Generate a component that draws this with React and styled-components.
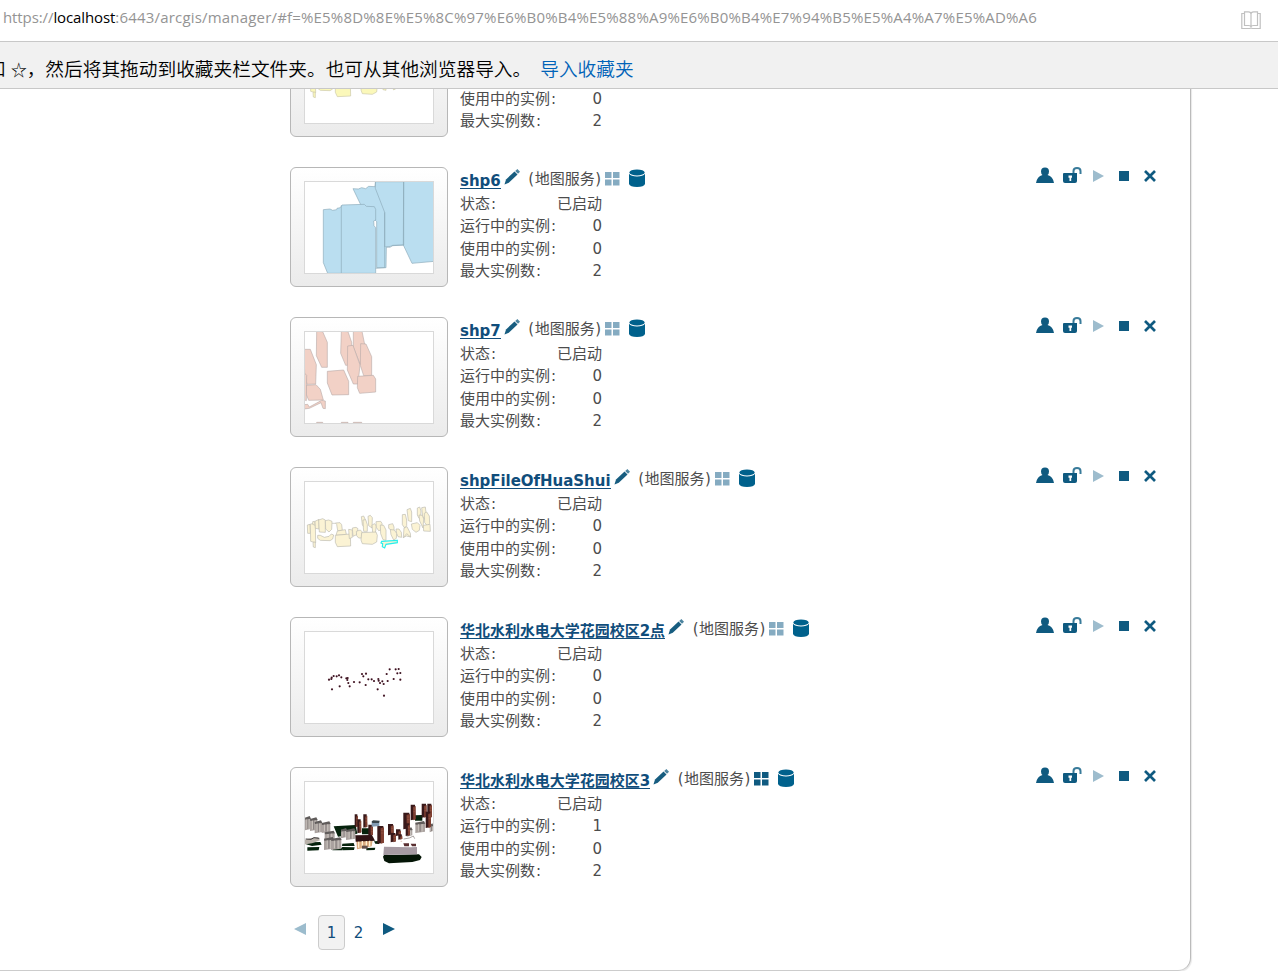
import React from "react";
import styled, { createGlobalStyle } from "styled-components";

const GlobalStyle = createGlobalStyle`
  * { box-sizing: border-box; }
  body { margin: 0; background: #fff; overflow: hidden; }
`;

const Browser = styled.div`
  display: flex;
  flex-direction: column;
  width: 1278px;
  height: 971px;
  overflow: hidden;
  font-family: "DejaVu Sans", "Noto Sans CJK SC", sans-serif;
`;
const AddressBar = styled.header`
  display: flex;
  justify-content: space-between;
  height: 42px;
  flex: none;
  padding: 5px 17px 0 3px;
  border-bottom: 1px solid #c8c8c8;
`;
const Url = styled.div`
  font: 15px/24px "Open Sans", sans-serif;
  letter-spacing: -0.1px;
  white-space: nowrap;
  color: #949494;
  b { font-weight: 400; color: #000; }
`;
const UrlPath = styled.span`
  letter-spacing: 0.185px;
`;
const BookIcon = styled.svg`
  width: 20px;
  height: 19px;
  margin-top: 6px;
`;
const FavoritesBar = styled.div`
  display: flex;
  flex: none;
  height: 47px;
  padding-top: 12px;
  border-bottom: 1px solid #c8c8c8;
  background: #f1f1f1;
  font: 18.7px/28px "Noto Sans CJK SC", sans-serif;
  font-weight: 350;
  white-space: pre;
  color: #000;
`;
const Hint = styled.span`
  margin-left: -13px;
`;
const Star = styled.span`
  display: inline-block;
  width: 16px;
  margin-left: 5px;
  font-size: 16px;
`;
const ImportLink = styled.a`
  margin-left: 9px;
  color: #0063b8;
`;
const Viewport = styled.main`
  flex: 1;
  min-height: 0;
  overflow: hidden;
`;
const Panel = styled.section`
  width: 1191px;
  height: 954px;
  margin-top: -72px;
  padding-left: 290px;
  border-right: 1px solid #bbb;
  border-bottom: 1px solid #ccc;
  border-radius: 0 0 13px 0;
  box-shadow: 1px 1px 1px #e8e8e8;
`;
const Row = styled.article`
  display: flex;
  height: 150px;
`;
const Frame = styled.div`
  width: 158px;
  height: 120px;
  flex: none;
  padding: 13px;
  border: 1px solid #b7b7b7;
  border-radius: 6px;
  background: linear-gradient(#fff, #ebebeb);
`;
const Thumb = styled.svg`
  display: block;
  width: 130px;
  height: 93px;
  border: 1px solid #d9d9d9;
  background: #fff;
`;
const Details = styled.div`
  flex: 1;
  padding: 1px 0 0 12px;
  font-size: 15px;
  color: #4c4c4c;
`;
const TitleLine = styled.div`
  display: flex;
  height: 25px;
  line-height: 25px;
  white-space: nowrap;
`;
const ServiceName = styled.a`
  height: 20px;
  margin-top: 1px;
  line-height: 24px;
  font-weight: 700;
  letter-spacing: -0.03px;
  color: #104d7b;
  border-bottom: 1px solid #104d7b;
`;
const PencilIcon = styled.svg`
  width: 17px;
  height: 17px;
  margin: 1px 0 0 3px;
`;
const ServiceType = styled.span`
  width: 74px;
  margin: -1px 0 0 7px;
  text-align: center;
  i { font-style: normal; margin: 0 0.5px; }
`;
const GridIcon = styled.svg`
  width: 15px;
  height: 14px;
  margin: 4px 0 0 3px;
  fill: ${(p) => (p.$active ? "#0f5a80" : "#85abc1")};
`;
const DatabaseIcon = styled.svg`
  width: 16px;
  height: 18px;
  margin: 1px 0 0 9px;
`;
const Stat = styled.div`
  display: flex;
  justify-content: space-between;
  width: 142px;
  height: 22.4px;
  line-height: 22.4px;
`;
const Colon = styled.span`
  margin-left: 1px;
`;
const Actions = styled.div`
  display: flex;
  width: 121px;
  height: 17px;
  margin-right: 33px;
  svg { display: block; }
`;
const Pager = styled.nav`
  display: flex;
  height: 35px;
  margin-top: -2px;
  font-size: 15px;
  line-height: 35px;
  color: #104d7b;
`;
const PageNumber = styled.span`
  width: 27px;
  height: 35px;
  text-align: center;
  border: 1px solid ${(p) => (p.$current ? "#ccc" : "transparent")};
  border-radius: 4px;
  background: ${(p) => (p.$current ? "#f2f2f2" : "transparent")};
`;
const Arrow = styled.svg`
  width: 12px;
  height: 14px;
  margin: ${(p) => (p.$next ? "7px 0 0 11px" : "7px 12px 0 4px")};
  fill: ${(p) => (p.$next ? "#0f5a80" : "#9cbccd")};
`;

const YELLOW_SHAPES = [
  "82,195 90,193 91,220 83,220", "91,192 106,190 107,248 92,244", "98,185 104,184 106,196 98,193",
  "105,184 117,178 117,207 106,205", "116,180 128,176 136,180 136,217 118,216", "136,182 146,180 156,184 155,208 147,216 137,207",
  "99,247 106,246 106,263 100,261", "113,226 121,226 133,232 147,229 154,222 161,225 158,237 150,242 121,241 113,235",
  "166,189 180,188 185,194 187,211 173,212 170,193", "172,213 196,209 199,223 168,226", "166,226 211,222 212,258 172,260 166,247",
  "206,208 217,210 217,232 208,236", "217,204 228,202 234,206 230,224 219,229", "229,214 241,210 247,216 245,234 236,234 230,227",
  "244,170 251,168 256,179 255,207 247,194", "249,180 257,179 262,194 262,214 251,214 250,202",
  "264,169 271,166 277,173 276,204 266,197", "276,195 284,191 289,198 286,220 278,217",
  "288,185 302,184 306,190 306,209 296,212 289,202", "245,218 288,216 292,226 290,246 277,253 247,251 243,240", "301,195 311,196 318,210 318,241 309,239 302,221",
  "326,194 338,191 342,201 342,212 335,211 326,205", "331,209 343,210 350,220 349,235 341,240 333,224", "348,207 357,207 364,217 365,232 354,230 350,220",
  "367,164 376,163 380,180 380,197 374,204 367,194", "381,149 391,145 395,156 395,185 385,182",
  "372,204 381,200 391,220 392,231 379,228 370,233", "394,192 412,188 420,196 418,211 408,217 397,208",
  "412,144 419,141 423,153 422,174 417,175 412,165", "425,143 436,141 438,158 437,181 428,169",
  "417,165 427,166 431,177 429,204 419,183", "433,160 440,156 448,168 449,190 442,197 434,188", "430,196 450,193 451,214 431,213",
];
const DOTS = [[147,209],[154,207],[155,203],[161,198],[170,199],[177,196],[184,202],[199,205],[203,204],[202,210],[205,219],[209,229],[156,238],[179,229],[222,216],[239,217],[246,192],[250,199],[258,191],[257,225],[265,208],[275,208],[282,213],[295,207],[296,212],[300,219],[307,214],[311,222],[323,213],[293,238],[312,257],[320,192],[329,178],[341,207],[347,178],[352,190],[356,177],[361,189],[361,209]];
const TOWERS = [[224,163,10,39],[232,178,12,42],[250,163,12,40],[265,194,14,33],[292,198,20,53],[324,192,17,34],[332,219,16,28],[348,208,15,20],[355,223,12,16],[370,158,20,50],[377,190,13,38],[392,134,15,47],[425,131,15,42],[442,131,14,43],[437,155,16,49]];
const GREY_BLOCKS = [[75,173,17,38],[90,177,22,36],[104,186,22,34],[125,189,26,30],[134,217,30,28],[132,236,29,34],[153,237,31,33],[183,209,18,26],[198,210,28,30],[406,188,29,31],[380,207,17,23],[449,195,11,22]];

const drawings = {
  blue: (
    <Thumb viewBox="75 291 384 273" preserveAspectRatio="none">
      <g fill="#badef0" stroke="#8daab9" strokeWidth="2">
        <path d="M219 311l16 1 10-4 12 3 9-7 19 1 2-15h85v190l-33 2-20 5-1 61h-28V410l-45-45z" />
        <path d="M371 288h92v241l-67 6-26-55z" />
        <path d="M286 288v22l28 72v104" fill="none" />
        <path d="M130 374l20-2 8 4 12-2 1-4 10-2 5-8 67-2 6 6 24 1 4 8v32l-6 3 1 14 5 6v137H143l-13-32z" />
        <path d="M184 361v205M314 382v166l-27 2M371 288v192l-34 1-6 6-15-2" fill="none" />
      </g>
    </Thumb>
  ),
  pink: (
    <Thumb viewBox="75 66 384 273" preserveAspectRatio="none">
      <g fill="#f2d1c6" stroke="#b7aaa7" strokeWidth="1.8" strokeLinejoin="round">
        <path d="M110 64l18 1 14 32v75h-17l-16-35zM184 64l20 1 11 32v68l-18 1-15-36z" />
        <path d="M220 64h26l8 39-13 61-21-52z" />
        <path d="M72 118h19l18 46-2 58-26 1-7-31z" />
        <path d="M203 108l16-2 21 59-6 57h-14l-18-42z" />
        <path d="M242 101l16 1 17 38v56l-24 1-10-31z" />
        <path d="M142 184l49-4 15 34v40l-50 1-14-36zM233 199l47-3 7 11v39l-48 4-7-17zM78 226l30-2 13 14 9 32-44 1-8-20z" />
        <path d="M72 284l11-1 5 8 37-20 11 2v23l-7-1-6-17-35 17-16 2z" />
        <path d="M110 337h18v3h-18zM184 337h20v3h-20zM220 337h25v3h-25zM72 188l8 8-1 76-7-3z" />
      </g>
    </Thumb>
  ),
  yellow: (
    <Thumb viewBox="75 66 384 273" preserveAspectRatio="none">
      <g fill="#fbf3d4" stroke="#bdbbb0" strokeWidth="2">
        {YELLOW_SHAPES.map((points) => <polygon key={points} points={points} />)}
      </g>
      <path d="M156 190h10M370 233l10-12 12 10" fill="none" stroke="#bdbbb0" strokeWidth="2" />
      <path d="M305 244l47-3v7l-34 5-4 11-7-4 1-9-5-2z" fill="#fbf3d4" stroke="#27efec" strokeWidth="3.5" />
    </Thumb>
  ),
  partial: (
    <Thumb viewBox="75 66 384 273" preserveAspectRatio="none">
      <g fill="#fbf8ba" stroke="#cbc9aa" strokeWidth="2">
        {YELLOW_SHAPES.map((points) => <polygon key={points} points={points} />)}
      </g>
    </Thumb>
  ),
  points: (
    <Thumb viewBox="75 66 384 273" preserveAspectRatio="none">
      {DOTS.map(([x, y], i) => (
        <g key={i}>
          <circle cx={x} cy={y} r="3.3" fill="#5a2636" />
          <circle cx={x} cy={y} r="1.6" fill="#170911" />
        </g>
      ))}
    </Thumb>
  ),
  city: (
    <Thumb viewBox="75 66 384 273" preserveAspectRatio="none">
      <g fill="#06230d">
        <path d="M161 199l66-4 5 26-58 9zM246 205h25v18h-25zM187 251l34-2 3 9h-38zM82 262l36-1-2 10-34 1zM161 262l26 1v8h-30zM186 261l38 1-2 8-34 1zM405 166l22-1v17h-22zM76 252l19-5 26-1 4 8-29 4zM259 264l27-1-2 7-25 1zM282 244l14-1 2 9-12-1z" />
        <path d="M309 290q2-9 18-5l90-2 8 8-5 9-23 6-70 4-14-7z" fill="#041506" />
      </g>
      {GREY_BLOCKS.map(([x, y, w, h], i) => (
        <g key={i}>
          <path d={`M${x} ${y}l${w} 2v${h - 6}l-${w} 4z`} fill="#aaa29f" />
          <path d={`M${x} ${y}l${w - 3}-5 4 8-${w} 3z`} fill="#605c5b" />
          <path d={`M${x + w / 3} ${y + 5}v${h - 10}M${x + w * 0.7} ${y + 4}v${h - 8}`} stroke="#c9c3bd" strokeWidth="3" />
          <path d={`M${x + w * 0.5} ${y + 4}v${h - 8}`} stroke="#756e70" strokeWidth="2" />
        </g>
      ))}
      <path d="M75 239l22-6 17-1 6 9-24 9-21 3z" fill="#b8b1a9" />
      <path d="M77 237l16 1 9-5 16 2" stroke="#3b3838" strokeWidth="3" fill="none" />
      {TOWERS.map(([x, y, w, h], i) => (
        <g key={i}>
          <path d={`M${x} ${y}h${w - 2}l2 ${h - 3}-${w} 3z`} fill="#39191a" />
          <path d={`M${x + w * 0.48} ${y + 7}l${w * 0.52}-3v${h - 7}l-${w * 0.48} 3z`} fill="#7f4032" />
          <path d={`M${x + w * 0.55} ${y + 13}h${w * 0.4}m-${w * 0.4} 8h${w * 0.4}`} stroke="#a86b55" strokeWidth="1.2" />
        </g>
      ))}
      <path d="M229 238l50-4-4 25-44 9z" fill="#d9aa7e" />
      <path d="M226 226l50-1 9 17-58 3z" fill="#301315" />
      <path d="M236 245v18m11-20v16m12-16v17m10-18v17" stroke="#fff0d0" strokeWidth="4" />
      <path d="M246 257h17v9h-17z" fill="#64504a" />
      <path d="M312 260l79 2 20-1v22l-101 2z" fill="#a69ba3" />
      <path d="M370 250h17v9h-14zM392 251h16v8h-12z" fill="#592e30" />
      <path d="M275 185l23-2v15l-23 2z" fill="#829bb3" />
      <path d="M275 184l5-3 19 1-2 7h-20z" fill="#39454c" />
      <path d="M371 237l17-3 12-6 4 8" stroke="#817977" strokeWidth="2" fill="none" />
    </Thumb>
  ),
};

const services = [
  { name: "shp5", art: "partial", running: 0 },
  { name: "shp6", art: "blue", running: 0 },
  { name: "shp7", art: "pink", running: 0 },
  { name: "shpFileOfHuaShui", art: "yellow", running: 0 },
  { name: "华北水利水电大学花园校区2点", art: "points", running: 0 },
  { name: "华北水利水电大学花园校区3", art: "city", running: 1, cached: true },
];

function StatLine({ label, value }) {
  return <Stat><span>{label}<Colon>:</Colon></span><span>{value}</span></Stat>;
}

function ServiceActions() {
  return (
    <Actions>
      <svg width="121" height="17" viewBox="0 0 121 17" fill="#0f5a80">
        <path d="M9 .6a4 4 0 0 1 4 4q0 2.500-1.500 3.400 5.500 1.500 6.500 8H0q1-6.500 6.500-8Q5 7.100 5 4.600a4 4 0 0 1 4-4z" />
        <path d="M28 6h13v8q0 2-2 2H29q-2 0-2-2V7q0-1 1-1z" />
        <path d="M37.500 6V4q0-3 3.500-3t3.500 3v3" fill="none" stroke="#397b9a" strokeWidth="2" />
        <path d="M32.500 8.500h3.500v2.200h-.8V14h-1.700v-3.300h-1z" fill="#fff" />
        <path d="M57 3l11 6-11 6z" fill="#9dbccd" />
        <path d="M83 4h10v10H83z" />
        <path d="M109 4l10 10M119 4l-10 10" stroke="#0f5a80" strokeWidth="2.700" />
      </svg>
    </Actions>
  );
}

function Service({ name, art, running, cached }) {
  return (
    <Row>
      <Frame>{drawings[art]}</Frame>
      <Details>
        <TitleLine>
          <ServiceName>{name}</ServiceName>
          <PencilIcon viewBox="0 0 17 17">
            <path d="M.500 15.500l1.500-5 8.500-8 3 3-8.700 8.200z" fill="#175d80" />
            <path d="M11.200 2l2.200-1.900 2.600 2.700-2 1.900z" fill="#4c849f" />
          </PencilIcon>
          <ServiceType><i>(</i>地图服务<i>)</i></ServiceType>
          <GridIcon $active={cached} viewBox="0 0 15 14">
            <path d="M0 0h6.500v6H0zM8 0h6.500v6H8zM0 7.500h6.500v6H0zM8 7.500h6.500v6H8z" />
          </GridIcon>
          <DatabaseIcon viewBox="0 0 16 18">
            <path d="M0 4.800q2 2.700 8 2.700t8-2.700V15q-1 3-8 3t-8-3z" fill="#00618c" />
            <ellipse cx="8" cy="3.400" rx="7.600" ry="3" fill="#00618c" />
          </DatabaseIcon>
        </TitleLine>
        <StatLine label="状态" value="已启动" />
        <StatLine label="运行中的实例" value={running} />
        <StatLine label="使用中的实例" value={0} />
        <StatLine label="最大实例数" value={2} />
      </Details>
      <ServiceActions />
    </Row>
  );
}

export default function App() {
  return (
    <Browser>
      <GlobalStyle />
      <AddressBar>
        <Url>https://<b>localhost</b><UrlPath>:6443/arcgis/manager/#f=%E5%8D%8E%E5%8C%97%E6%B0%B4%E5%88%A9%E6%B0%B4%E7%94%B5%E5%A4%A7%E5%AD%A6</UrlPath></Url>
        <BookIcon viewBox="0 0 20 19" fill="none" stroke="#c0c0c0" strokeWidth="1.200">
          <path d="M3.500.8h4Q10 .8 10 3v13q0-1.500-2.500-1.500h-4zM16.500.8h-4Q10 .8 10 3v13q0-1.500 2.500-1.500h4z" />
          <path d="M3 2.500H.8v15h8l1.200-.6 1.200.6h8v-15H17" />
        </BookIcon>
      </AddressBar>
      <FavoritesBar>
        <Hint>和<Star>☆</Star>，然后将其拖动到收藏夹栏文件夹。也可从其他浏览器导入。</Hint>
        <ImportLink>导入收藏夹</ImportLink>
      </FavoritesBar>
      <Viewport>
        <Panel>
          {services.map((s) => <Service key={s.name} {...s} />)}
          <Pager>
            <Arrow viewBox="0 0 12 14"><path d="M12 1v12L0 7z" /></Arrow>
            <PageNumber $current>1</PageNumber>
            <PageNumber>2</PageNumber>
            <Arrow $next viewBox="0 0 12 14"><path d="M0 1v12l12-6z" /></Arrow>
          </Pager>
        </Panel>
      </Viewport>
    </Browser>
  );
}
